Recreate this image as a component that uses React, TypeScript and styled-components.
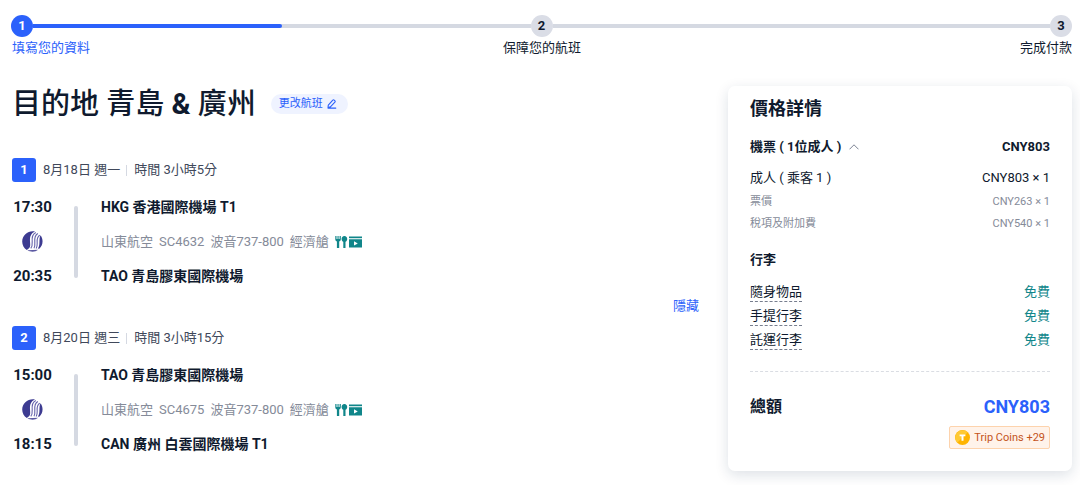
import React from "react";
import styled, { createGlobalStyle } from "styled-components";

const blue = "#2b61fb";
const ink = "#0f1a2e";
const grey = "#858b99";
const teal = "#10868a";
const line = "#d5d9e2";

const GlobalStyle = createGlobalStyle`
  * { box-sizing: border-box; }
  body {
    margin: 0;
    background: #fff;
    color: ${ink};
    font-family: Roboto, "Noto Sans CJK TC", sans-serif;
    font-size: 13px;
    line-height: 20px;
  }
  h1, h2, h3, p, dl, dt, dd, ol { margin: 0; padding: 0; }
  button { border: 0; background: none; padding: 0; font: inherit; color: inherit; cursor: pointer; }
`;

const Page = styled.main`
  padding: 15px 8px 14px 12px;
`;

const Steps = styled.nav`
  margin-left: -1px;
`;

const StepTrack = styled.div`
  display: flex;
  align-items: center;
`;

const StepDot = styled.span<{ $active?: boolean }>`
  width: 22px;
  height: 22px;
  border-radius: 50%;
  background: ${(p) => (p.$active ? blue : "#dadde6")};
  color: ${(p) => (p.$active ? "#fff" : ink)};
  font-weight: 700;
  line-height: 22px;
  text-align: center;
`;

const StepBar = styled.div`
  flex: 1;
  height: 4px;
  background: ${line};
`;

const StepFill = styled.div`
  width: 50%;
  height: 4px;
  border-radius: 0 2px 2px 0;
  background: ${blue};
`;

const StepLabels = styled.ol`
  display: grid;
  grid-template-columns: 1fr auto 1fr;
  margin-top: 1px;
  padding-left: 1px;
  list-style: none;
`;

const StepLabel = styled.li<{ $active?: boolean }>`
  color: ${(p) => (p.$active ? blue : ink)};
  &:last-child { text-align: right; }
`;

const Columns = styled.div`
  display: grid;
  grid-template-columns: minmax(0, 1fr) 344px;
  align-items: start;
  gap: 29px;
  margin-top: 28px;
`;

const TitleRow = styled.div`
  display: flex;
  align-items: center;
  gap: 15px;
  height: 36px;
  margin-bottom: 36px;
`;

const Title = styled.h1`
  font-size: 29px;
  font-weight: 500;
  line-height: 36px;
`;

const Ampersand = styled.span`
  font-weight: 700;
`;

const ChangeButton = styled.button`
  display: flex;
  align-items: center;
  gap: 4px;
  height: 20px;
  padding: 0 11px 0 8px;
  border-radius: 10px;
  background: #eff3ff;
  color: ${blue};
  font-size: 11px;
  line-height: 20px;
`;

const SegmentHead = styled.div`
  display: flex;
  align-items: center;
  height: 24px;
  margin-bottom: 13px;
  color: #40485a;
`;

const Badge = styled.span`
  width: 24px;
  height: 24px;
  margin-right: 7px;
  border-radius: 3px;
  background: ${blue};
  color: #fff;
  font-weight: 700;
  line-height: 24px;
  text-align: center;
`;

const Divider = styled.span`
  width: 1px;
  height: 11px;
  margin: 0 7px 0 6px;
  background: ${line};
`;

const SegmentBody = styled.div`
  display: grid;
  grid-template-columns: 41px 4px minmax(0, 1fr);
  grid-template-rows: 24px 45px 24px;
  column-gap: 21px;
  align-items: center;
`;

const Time = styled.time`
  font-size: 15px;
  font-weight: 700;
  text-align: center;
`;

const LogoCell = styled.div`
  display: flex;
  justify-content: center;
`;

const Rail = styled.span`
  grid-column: 2;
  grid-row: 1 / 4;
  align-self: stretch;
  margin: 11px 0 10px;
  border-radius: 2px;
  background: ${line};
`;

const Airport = styled.p`
  grid-column: 3;
  padding-left: 2px;
  font-size: 14px;
  font-weight: 700;
`;

const FlightInfo = styled.p`
  grid-column: 3;
  display: flex;
  align-items: center;
  gap: 6px;
  padding-left: 2px;
  color: ${grey};
`;

const Amenities = styled.span`
  display: flex;
  align-items: center;
  gap: 1px;
  color: ${teal};
`;

const HideRow = styled.div`
  display: flex;
  justify-content: flex-end;
  height: 20px;
  margin: 8px 0 10px;
  color: ${blue};
`;

const Card = styled.aside`
  padding: 11px 22px 22px;
  border-radius: 7px;
  background: #fff;
  box-shadow: 0 4px 14px rgba(15, 41, 77, 0.14);
`;

const CardTitle = styled.h2`
  margin-bottom: 16px;
  font-size: 18px;
  font-weight: 700;
  line-height: 24px;
`;

const SubTitle = styled.h3`
  margin: 15px 0 10px;
  font-size: 13px;
  font-weight: 700;
`;

const PriceRow = styled.div<{ $kind?: "head" | "fare" | "bag" }>`
  display: flex;
  align-items: center;
  justify-content: space-between;
  height: ${(p) => (p.$kind === "bag" ? 24 : p.$kind === "fare" ? 22 : 20)}px;
  font-size: ${(p) => (p.$kind === "fare" ? 11 : 13)}px;
  font-weight: ${(p) => (p.$kind === "head" ? 700 : 400)};
  color: ${(p) => (p.$kind === "fare" ? grey : ink)};
`;

const Fares = styled.dl`
  margin-top: 11px;
  & > div:first-child { margin-bottom: 3px; }
`;

const Toggle = styled.button`
  display: flex;
  align-items: center;
  gap: 8px;
`;

const BagName = styled.dt`
  border-bottom: 1px dashed #777e8e;
  line-height: 18px;
`;

const Free = styled.dd`
  color: ${teal};
`;

const Total = styled.div`
  display: flex;
  align-items: center;
  justify-content: space-between;
  margin-top: 19px;
  padding-top: 21px;
  border-top: 1px dashed #dadde3;
  font-size: 16px;
  font-weight: 700;
  line-height: 28px;
`;

const TotalPrice = styled.strong`
  color: ${blue};
  font-size: 18px;
  font-weight: 700;
`;

const Coins = styled.p`
  display: flex;
  align-items: center;
  gap: 4px;
  width: fit-content;
  height: 23px;
  margin: 5px 0 0 auto;
  padding: 0 4px 0 5px;
  border: 1px solid #fdd3ad;
  border-radius: 2px;
  background: #fff3ea;
  color: #c4541b;
  font-size: 11px;
`;

const PencilIcon = () => (
  <svg width="10" height="10" viewBox="0 0 10 10" fill="none" stroke="currentColor" strokeWidth="1.1" aria-hidden="true">
    <path d="M1 8.6 1.3 6.1 5.8 1.1Q6.5 0.5 7.2 1.1L7.9 1.8Q8.5 2.5 7.9 3.2L3.4 7.9ZM1 9.1H8.8" strokeLinejoin="round" strokeLinecap="round" />
  </svg>
);

const ChevronUp = () => (
  <svg width="10" height="6" viewBox="0 0 10 6" fill="none" stroke="#7d8494" strokeWidth="1" aria-hidden="true">
    <path d="M0.5 5.3 5 0.8 9.5 5.3" />
  </svg>
);

const AirlineLogo = () => (
  <svg width="21" height="21" viewBox="0 0 21 21" aria-hidden="true">
    <path d="M13 0.4C6.4-0.9 0.2 4 0.2 10.5 0.2 14 2 17.2 4.8 19L7 17.2C8.6 15.8 8.2 13.2 8 10.4 7.8 6 8.6 2.4 13 0.4Z" fill="#3d3b91" />
    <path d="M5.4 19.2C9 21.4 13.2 21 16.2 18.8Z" fill="#3d3b91" opacity="0.85" />
    <path d="M18.6 4.2C21.6 8.4 21.2 14.6 17 18.1L16 17.2C18.6 14.6 16.4 7.6 18.6 4.2Z" fill="#3d3b91" />
    <g fill="none" stroke="#6664ab" strokeWidth="1.1">
      <path d="M13.8 1.6C9.8 3.4 9.9 7.4 10.2 11 10.4 14 10 16 8.8 17.4" />
      <path d="M15.9 2.6C12.2 4.4 12.5 8 12.8 11.4 13 14.2 12.8 15.8 12 17.2" />
      <path d="M17.8 4.2C14.6 5.8 15.1 9 15.2 12 15.3 14.4 15 16 14.2 17.4" />
    </g>
  </svg>
);

const MealIcon = () => (
  <svg width="13" height="12" viewBox="0 0 13 12" fill="currentColor" aria-hidden="true">
    <path d="M0.3 0H1.5V3H2.5V0H3.6V3H4.6V0H5.8V3.4Q5.8 5 4.2 5.4V12H1.9V5.4Q0.3 5 0.3 3.4Z" />
    <path d="M9.4 0C11.2 0 12.2 1.4 12.2 3 12.2 4.5 11.4 5.4 10.5 5.8V12H8.3V5.8C7.4 5.4 6.6 4.5 6.6 3 6.6 1.4 7.6 0 9.4 0Z" />
  </svg>
);

const VideoIcon = () => (
  <svg width="13" height="12" viewBox="0 0 13 12" fill="currentColor" aria-hidden="true">
    <path d="M0 0.5H13V2.2H0Z" />
    <path fillRule="evenodd" d="M0 3.3H13V11.5H0ZM5 5.2V9.6L8.8 7.4Z" />
  </svg>
);

const CoinIcon = () => (
  <svg width="15" height="15" viewBox="0 0 15 15" aria-hidden="true">
    <circle cx="7.5" cy="7.5" r="7.5" fill="#ffb400" />
    <path d="M2.2 12.8A7.5 7.5 0 0 1 12.8 2.2Z" fill="#ffc933" />
    <path d="M4.6 4.6H10.4V6.3H8.5V10.8H6.5V6.3H4.6Z" fill="#fff" />
  </svg>
);

type Stop = { time: string; name: string };
type SegmentData = { no: number; date: string; duration: string; from: Stop; to: Stop; flight: string };

const segments: SegmentData[] = [
  {
    no: 1,
    date: "8月18日 週一",
    duration: "時間 3小時5分",
    from: { time: "17:30", name: "HKG 香港國際機場 T1" },
    to: { time: "20:35", name: "TAO 青島膠東國際機場" },
    flight: "SC4632",
  },
  {
    no: 2,
    date: "8月20日 週三",
    duration: "時間 3小時15分",
    from: { time: "15:00", name: "TAO 青島膠東國際機場" },
    to: { time: "18:15", name: "CAN 廣州 白雲國際機場 T1" },
    flight: "SC4675",
  },
];

const Segment = ({ data }: { data: SegmentData }) => (
  <section>
    <SegmentHead>
      <Badge>{data.no}</Badge>
      <span>{data.date}</span>
      <Divider />
      <span>{data.duration}</span>
    </SegmentHead>
    <SegmentBody>
      <Rail />
      <Time>{data.from.time}</Time>
      <Airport>{data.from.name}</Airport>
      <LogoCell>
        <AirlineLogo />
      </LogoCell>
      <FlightInfo>
        <span>山東航空</span>
        <span>{data.flight}</span>
        <span>波音737-800</span>
        <span>經濟艙</span>
        <Amenities>
          <MealIcon />
          <VideoIcon />
        </Amenities>
      </FlightInfo>
      <Time>{data.to.time}</Time>
      <Airport>{data.to.name}</Airport>
    </SegmentBody>
  </section>
);

export default function App() {
  return (
    <>
      <GlobalStyle />
      <Page>
        <Steps>
          <StepTrack>
            <StepDot $active>1</StepDot>
            <StepBar>
              <StepFill />
            </StepBar>
            <StepDot>2</StepDot>
            <StepBar />
            <StepDot>3</StepDot>
          </StepTrack>
          <StepLabels>
            <StepLabel $active>填寫您的資料</StepLabel>
            <StepLabel>保障您的航班</StepLabel>
            <StepLabel>完成付款</StepLabel>
          </StepLabels>
        </Steps>
        <Columns>
          <div>
            <TitleRow>
              <Title>
                目的地 青島 <Ampersand>&amp;</Ampersand> 廣州
              </Title>
              <ChangeButton type="button">
                更改航班
                <PencilIcon />
              </ChangeButton>
            </TitleRow>
            <Segment data={segments[0]} />
            <HideRow>
              <button type="button">隱藏</button>
            </HideRow>
            <Segment data={segments[1]} />
          </div>
          <Card>
            <CardTitle>價格詳情</CardTitle>
            <PriceRow $kind="head">
              <Toggle type="button">
                機票 ( 1位成人 )
                <ChevronUp />
              </Toggle>
              <span>CNY803</span>
            </PriceRow>
            <Fares>
              <PriceRow>
                <dt>成人 ( 乘客 1 )</dt>
                <dd>CNY803 × 1</dd>
              </PriceRow>
              <PriceRow $kind="fare">
                <dt>票價</dt>
                <dd>CNY263 × 1</dd>
              </PriceRow>
              <PriceRow $kind="fare">
                <dt>稅項及附加費</dt>
                <dd>CNY540 × 1</dd>
              </PriceRow>
            </Fares>
            <SubTitle>行李</SubTitle>
            <dl>
              {["隨身物品", "手提行李", "託運行李"].map((name) => (
                <PriceRow key={name} $kind="bag">
                  <BagName>{name}</BagName>
                  <Free>免費</Free>
                </PriceRow>
              ))}
            </dl>
            <Total>
              <span>總額</span>
              <TotalPrice>CNY803</TotalPrice>
            </Total>
            <Coins>
              <CoinIcon />
              Trip Coins +29
            </Coins>
          </Card>
        </Columns>
      </Page>
    </>
  );
}
